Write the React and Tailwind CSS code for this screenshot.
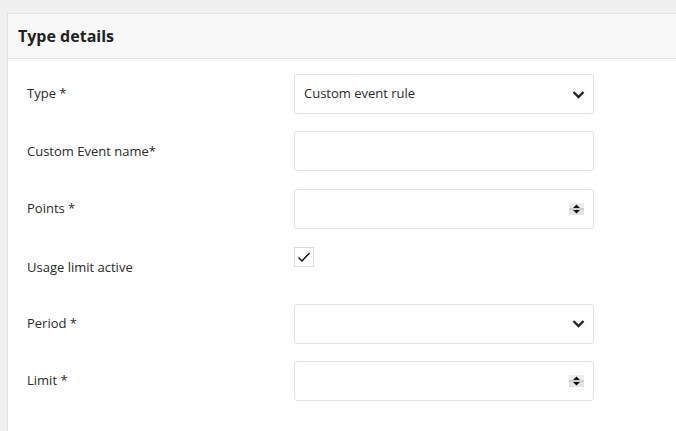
const font = { fontFamily: '"Open Sans", "Noto Sans", sans-serif' };

function Spinner() {
  return (
    <svg width="15" height="12" viewBox="0 0 15 12" className="shrink-0">
      <rect x="0" y="0" width="15" height="12" fill="#e3e3e3" />
      <rect x="0" y="0" width="15" height="5.5" fill="#ededed" />
      <line x1="0" y1="6" x2="15" y2="6" fill="none" stroke="#b8b8b8" strokeWidth="1" />
      <path d="M4 5 L7.5 1.5 L11 5 Z" fill="#111" />
      <path d="M4 7 L7.5 10.5 L11 7 Z" fill="#111" />
    </svg>
  );
}

function Chevron() {
  return (
    <svg width="13" height="9" viewBox="0 0 13 9" className="shrink-0 mr-[-1px]">
      <path d="M1.5 2 L6.5 7 L11.5 2" fill="none" stroke="#222" strokeWidth="2.3" />
    </svg>
  );
}

function Field({ kind, value }) {
  return (
    <div className="w-[300px] h-[40px] border border-[#e2e2e2] rounded-[3px] bg-white flex items-center pl-[9px] pr-[9px]">
      <span className="flex-1 text-[13px] text-[#2a2a2a]">{value}</span>
      {kind === "select" && <Chevron />}
      {kind === "number" && <Spinner />}
    </div>
  );
}

function Row({ label, children, labelClass = "" }) {
  return (
    <div className="flex">
      <div className={`w-[267px] text-[13px] text-[#2a2a2a] flex items-center h-[40px] ${labelClass}`}>
        {label}
      </div>
      {children}
    </div>
  );
}

export default function App() {
  return (
    <div className="h-[431px] w-[676px] overflow-hidden bg-[#f0f0f0] pt-[13px] pl-[7px]" style={font}>
      <div className="w-[700px] h-[440px] bg-white border border-[#e2e2e2]">
        <div className="h-[45px] bg-[#f8f8f8] border-b border-[#e2e2e2] flex items-center pl-[10px]">
          <h2 className="text-[16px] font-bold text-[#222]">Type details</h2>
        </div>
        <div className="pt-[15px] pl-[19px] flex flex-col gap-[17.4px]">
          <Row label="Type *">
            <Field kind="select" value="Custom event rule" />
          </Row>
          <Row label="Custom Event name*">
            <Field />
          </Row>
          <Row label="Points *">
            <Field kind="number" />
          </Row>
          <Row label="Usage limit active" labelClass="pt-[4px]">
            <div className="h-[40px] pt-px">
              <div className="w-[20px] h-[20px] border border-[#dcdcdc] bg-white flex items-center justify-center">
                <svg width="14" height="12" viewBox="0 0 14 12">
                  <path d="M1.5 6.5 L5 10 L12.5 2" fill="none" stroke="#111" strokeWidth="1.4" />
                </svg>
              </div>
            </div>
          </Row>
          <Row label="Period *">
            <Field kind="select" />
          </Row>
          <Row label="Limit *">
            <Field kind="number" />
          </Row>
        </div>
      </div>
    </div>
  );
}
